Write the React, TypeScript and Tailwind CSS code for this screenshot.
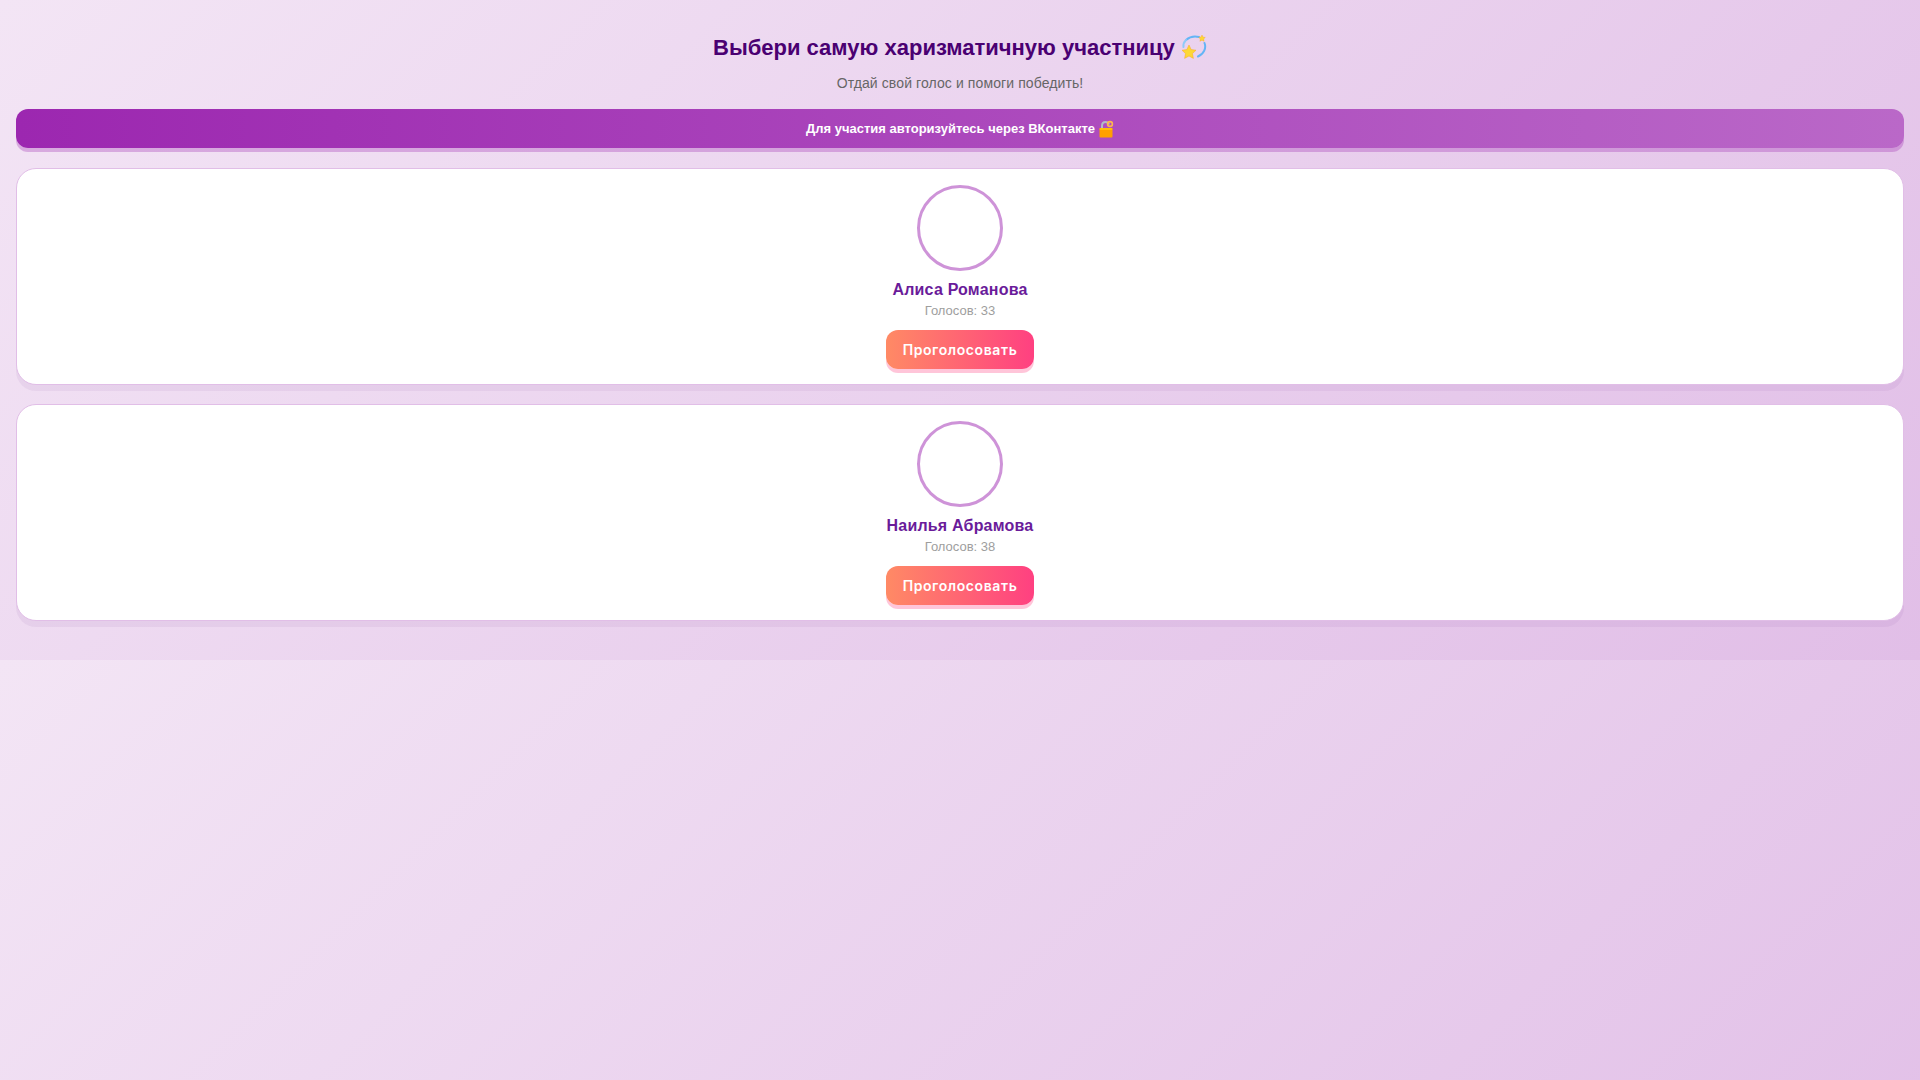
import React from "react";

const participants = [
  { name: "Алиса Романова", votes: 33 },
  { name: "Наилья Абрамова", votes: 38 },
];

// ring with two stars, next to the title
const SparkleIcon: React.FC = () => (
  <svg viewBox="0 0 26 26" className="inline-block w-[26px] h-[26px] align-[-5px]">
    <path d="M5 6 C9 2.5 14 2 18 3 M23.5 9 C25.5 14 23 20 17 22.5" fill="none" stroke="#64b5f6" strokeWidth="2" strokeLinecap="round" />
    <path d="M2.5 13 C2 10 3 8 5 6" fill="none" stroke="#90caf9" strokeWidth="2" strokeLinecap="round" />
    <path d="M8 11 L10.2 15.6 L15 16.2 L11.5 19.6 L12.4 24.4 L8 22 L3.6 24.4 L4.5 19.6 L1 16.2 L5.8 15.6 Z" fill="#fdd835" stroke="#f9a825" strokeWidth="0.5" />
    <path d="M21 1 L22 3.1 L24.3 3.4 L22.6 5 L23.1 7.3 L21 6.2 L18.9 7.3 L19.4 5 L17.7 3.4 L20 3.1 Z" fill="#fdd835" stroke="#f9a825" strokeWidth="0.4" />
  </svg>
);

const LockIcon: React.FC = () => (
  <svg viewBox="0 0 16 18" className="inline-block w-[16px] h-[18px]">
    <path d="M4 9 V6 C4 3 6 2 7.5 2 C9.5 2 10.5 3 11 4.5" fill="none" stroke="#b0bec5" strokeWidth="2" />
    <circle cx="12" cy="4" r="2.4" fill="none" stroke="#ffb74d" strokeWidth="1.6" />
    <rect x="1.5" y="8" width="13" height="9.5" rx="1" fill="#ffa000" />
    <rect x="1.5" y="8" width="13" height="2" rx="1" fill="#ffc107" />
  </svg>
);

const ParticipantCard: React.FC<{ name: string; votes: number }> = ({ name, votes }) => (
  <div className="flex flex-col items-center bg-white border border-[#e1bee7] rounded-[20px] pt-4 h-[217px] shadow-[0_6px_0_rgba(74,0,114,0.05)]">
    <div className="w-[86px] h-[86px] rounded-full border-[3px] border-[#ce93d8]" />
    <div className="mt-[7px] text-[16px] leading-[24px] font-bold tracking-[0.2px] text-[#6a1b9a]">{name}</div>
    <div className="text-[13px] leading-[18px] text-[#9e9e9e]">Голосов: {votes}</div>
    <button className="mt-[10px] w-[148px] h-[39px] rounded-xl text-white text-[14px] font-semibold tracking-[0.6px] [font-family:Inter,sans-serif] bg-[linear-gradient(90deg,#ff8a65,#ff4081)] shadow-[0_4px_0_rgba(255,64,129,0.3)]">
      Проголосовать
    </button>
  </div>
);

export default function App() {
  return (
    <div className="min-h-screen px-4 pt-4 [font-family:'Liberation_Sans',Arial,sans-serif] bg-[linear-gradient(135deg,#f3e5f5,#e1bee7)] bg-[length:100%_660px]">
      <h1 className="mt-4 text-center text-[22px] leading-[32px] font-bold text-[#4a0072]">
        Выбери самую харизматичную участницу <SparkleIcon />
      </h1>
      <p className="mt-[9px] text-center text-[14px] leading-[20px] tracking-[0.1px] text-[#666]">Отдай свой голос и помоги победить!</p>
      <div className="mt-[16px] h-[39px] flex items-center justify-center gap-[3px] rounded-xl text-white text-[13px] font-bold bg-[linear-gradient(90deg,#9c27b0,#ba68c8)] shadow-[0_4px_0_rgba(156,39,176,0.3)]">
        Для участия авторизуйтесь через ВКонтакте <LockIcon />
      </div>
      <div className="mt-5 flex flex-col gap-[19px]">
        {participants.map((p) => (
          <ParticipantCard key={p.name} name={p.name} votes={p.votes} />
        ))}
      </div>
    </div>
  );
}
